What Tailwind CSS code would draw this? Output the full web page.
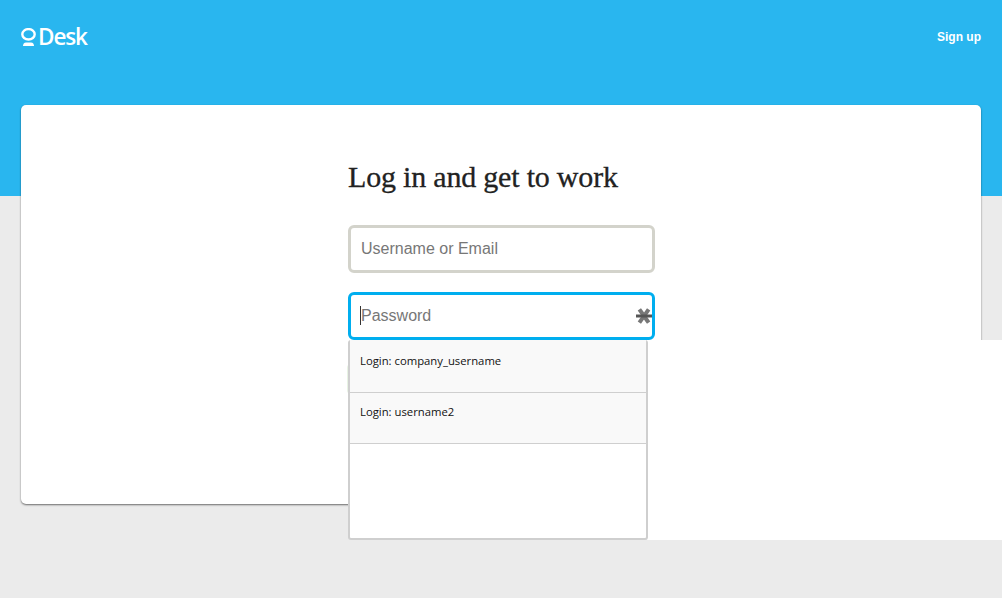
<!DOCTYPE html>
<html><head><meta charset="utf-8"><script src="https://cdn.jsdelivr.net/npm/@tailwindcss/browser@4"></script></head>
<body class="m-0 h-[598px] w-[1002px] overflow-hidden bg-[#ebebeb] font-['Liberation_Sans',sans-serif]">
<div class="relative h-[598px] w-[1002px]">
  <header class="h-[196px] bg-[#29b6ef] pl-[20px] pr-[21px]">
    <div class="flex h-[74px] items-center justify-between">
      <div class="flex items-center text-white">
        <svg width="18" height="19" viewBox="0 0 18 19" fill="none"><ellipse cx="8.500" cy="6.300" rx="6.200" ry="5.200" stroke="#fff" stroke-width="2.400"/><path d="M3 18c0-2 1-3.600 3-3.600h5c2 0 3 1.600 3 3.600z" fill="#fff"/></svg>
        <span class="text-[22.5px] font-semibold leading-none tracking-[-1.1px] font-['Open_Sans',sans-serif]">Desk</span>
      </div>
      <a class="text-[12px] font-bold text-white">Sign up</a>
    </div>
  </header>
  <main class="absolute left-[21px] top-[105px] h-[399px] w-[960px] rounded-[5px] bg-white pl-[327px] pt-[54px] shadow-[0_1px_2px_rgba(0,0,0,0.55)]">
    <h1 class="h-[36px] text-[30px] leading-[36px] text-[#222] font-['Liberation_Serif',serif] tracking-[-0.2px] [-webkit-text-stroke:0.3px_#222]">Log in and get to work</h1>
    <div class="mt-[30px] flex h-[48px] w-[307px] items-center rounded-[6px] border-[3px] border-[#d3d3cb] pl-[10px] text-[16px] text-[#777]">Username or Email</div>
    <div class="mt-[19px] flex h-[48px] w-[307px] items-center justify-between rounded-[6px] border-[3px] border-[#00aeef] pl-[9px] pr-[1px] pb-[2px] text-[16px] text-[#777]">
      <span class="border-l border-[#333] leading-[19px]">Password</span>
      <svg width="16" height="16" viewBox="0 0 16 16" class="mr-[-1px] mt-[2px]"><path d="M4.500 3l7 10M11.500 3l-7 10" stroke="#777" stroke-width="4" stroke-linecap="square"/><path d="M0 8h16" stroke="#555" stroke-width="3"/></svg>
    </div>
    <div class="mt-[24px] ml-[-1px] h-[30px] w-[120px] rounded-[4px] bg-[#e8f3e4]"></div>
  </main>
  <div class="absolute left-[647px] top-[340px] h-[200px] w-[355px] bg-white"></div>
  <div class="absolute left-[348px] top-[340px] h-[200px] w-[300px] rounded-[3px] border-2 border-t-0 border-[#cfcfcf] bg-white font-['Open_Sans',sans-serif] text-[11.3px] text-[#111]">
    <div class="h-[53px] border-b border-[#cfcfcf] bg-[#f9f9f9] pl-[10px] pt-[12px] leading-[17px]">Login: company_username</div>
    <div class="h-[51px] border-b border-[#cfcfcf] bg-[#f9f9f9] pl-[10px] pt-[10px] leading-[17px]">Login: username2</div>
  </div>
</div>
</body></html>
